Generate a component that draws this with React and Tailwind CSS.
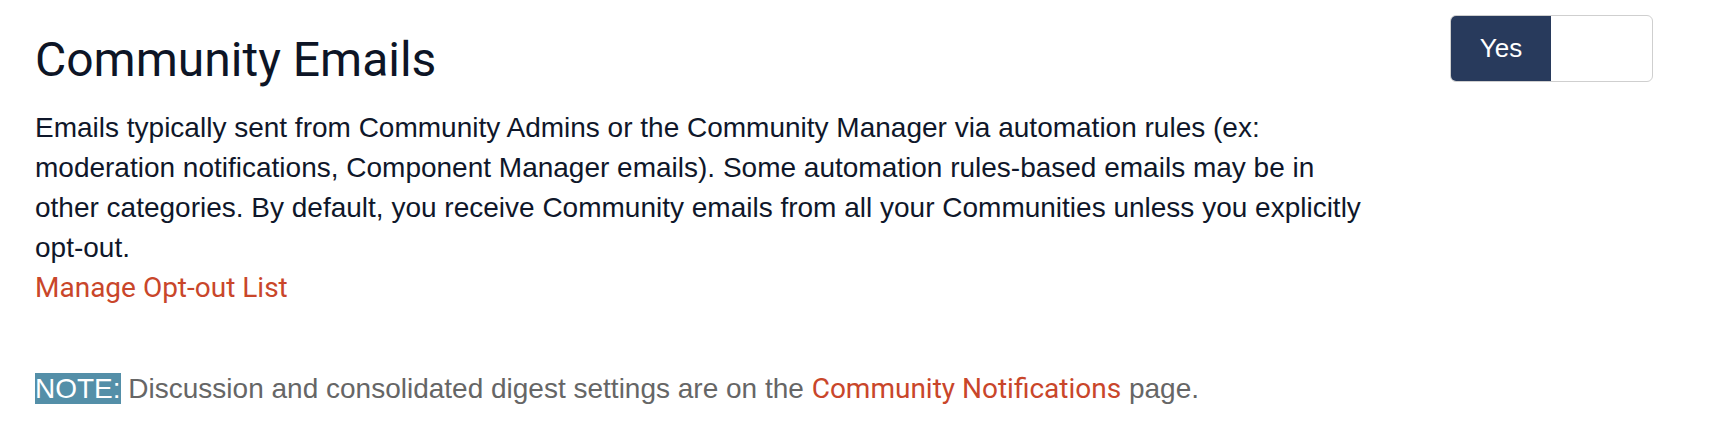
function Toggle() {
    return (
        <div className="flex w-[203px] h-[67px] rounded-[6px] border border-[#cfcfcf] bg-white overflow-hidden">
            <div className="flex w-[100px] items-center justify-center bg-[#283a5c] text-white text-[26px] font-['Liberation_Sans',Arial,sans-serif]">
                Yes
            </div>
            <div className="flex-1" />
        </div>
    )
}

export default function App() {
    return (
        <div className="flex justify-between bg-white pl-[35px] pr-[59px] h-[428px] font-['Liberation_Sans',Arial,sans-serif]">
            <div>
                <h2 className="pt-[32px] text-[48px] leading-[56px] text-[#0d1526] font-['Roboto',sans-serif]">
                    Community Emails
                </h2>
                <p className="mt-[20px] w-[1350px] text-[28px] leading-[40px] text-[#0f172a]">
                    Emails typically sent from Community Admins or the Community Manager via automation rules (ex:
                    moderation notifications, Component Manager emails). Some automation rules-based emails may be in
                    other categories. By default, you receive Community emails from all your Communities unless you explicitly
                    opt-out.
                </p>
                <a href="#" className="block text-[28px] leading-[40px] text-[#c9462a] font-['Roboto',sans-serif]">
                    Manage Opt-out List
                </a>
                <p className="mt-[61px] text-[28px] leading-[40px] text-[#666666]">
                    <span className="bg-[#548fa8] text-white">NOTE:</span> Discussion and consolidated digest settings are on the{" "}
                    <a href="#" className="text-[#c9462a] font-['Roboto',sans-serif]">Community Notifications</a> page.
                </p>
            </div>
            <div className="pt-[15px]">
                <Toggle />
            </div>
        </div>
    )
}
